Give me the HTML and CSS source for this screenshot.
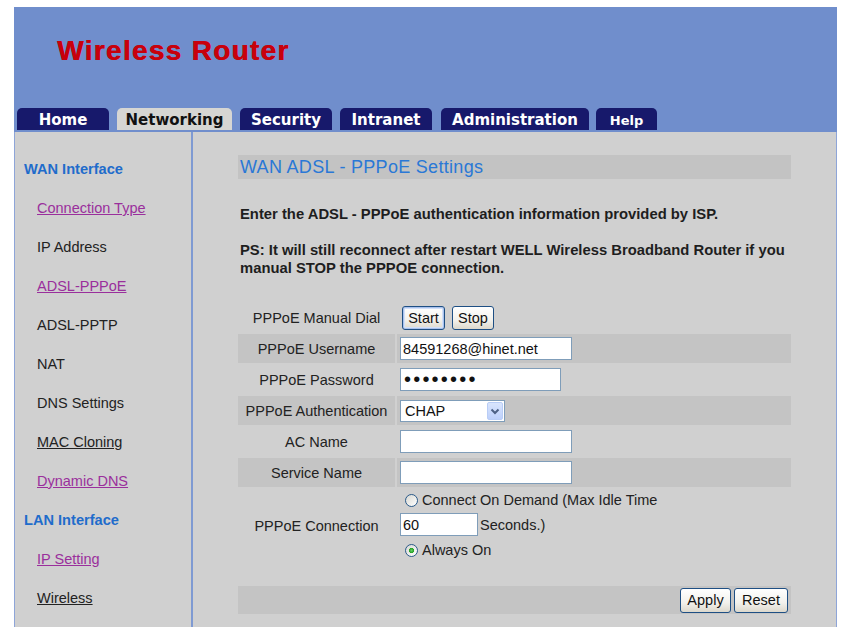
FILE: index.html
```html
<!DOCTYPE html>
<html lang="en">
<head>
<meta charset="utf-8">
<title>Wireless Router - WAN ADSL PPPoE Settings</title>
<link rel="stylesheet" href="styles.css">
</head>
<body>
<div class="page">
  <header class="header">
    <div class="brand">Wireless Router</div>
    <nav class="tabs">
      <a class="tab tab-home" href="#">Home</a>
      <a class="tab tab-networking active" href="#">Networking</a>
      <a class="tab tab-security" href="#">Security</a>
      <a class="tab tab-intranet" href="#">Intranet</a>
      <a class="tab tab-admin" href="#">Administration</a>
      <a class="tab tab-help" href="#">Help</a>
    </nav>
  </header>
  <div class="main">
    <aside class="sidebar">
      <div class="side-head">WAN Interface</div>
      <a class="side-link visited" href="#">Connection Type</a>
      <span class="side-link plain">IP Address</span>
      <a class="side-link visited" href="#">ADSL-PPPoE</a>
      <span class="side-link plain">ADSL-PPTP</span>
      <span class="side-link plain">NAT</span>
      <span class="side-link plain">DNS Settings</span>
      <a class="side-link link" href="#">MAC Cloning</a>
      <a class="side-link visited" href="#">Dynamic DNS</a>
      <div class="side-head">LAN Interface</div>
      <a class="side-link visited" href="#">IP Setting</a>
      <a class="side-link link" href="#">Wireless</a>
    </aside>
    <section class="content">
      <div class="title-bar">WAN ADSL - PPPoE Settings</div>
      <p class="note">Enter the ADSL - PPPoE authentication information provided by ISP.</p>
      <p class="note ps">PS: It will still reconnect after restart WELL Wireless Broadband Router if you<br>manual STOP the PPPOE connection.</p>
      <div class="form">
        <div class="cell-label">PPPoE Manual Dial</div>
        <div class="cell-value"><button class="btn btn-default btn-start" type="button">Start</button><button class="btn btn-stop" type="button">Stop</button></div>

        <div class="cell-label shade">PPPoE Username</div>
        <div class="cell-value shade"><input class="text w-long" type="text" value="84591268@hinet.net"></div>

        <div class="cell-label">PPPoE Password</div>
        <div class="cell-value"><input class="text w-pass pass" type="password" value="12345678"></div>

        <div class="cell-label shade">PPPoE Authentication</div>
        <div class="cell-value shade">
          <span class="select">
            <select class="select-native"><option>CHAP</option><option>PAP</option></select>
            <span class="select-arrow"><svg width="16" height="18" viewBox="0 0 16 18"><path d="M4.5 7.5 L8 11 L11.5 7.5" fill="none" stroke="#4d6185" stroke-width="2"/></svg></span>
          </span>
        </div>

        <div class="cell-label">AC Name</div>
        <div class="cell-value"><input class="text w-long" type="text" value=""></div>

        <div class="cell-label shade">Service Name</div>
        <div class="cell-value shade"><input class="text w-long" type="text" value=""></div>

        <div class="cell-label">PPPoE Connection</div>
        <div class="cell-value conn">
          <label class="opt-line"><input class="radio" type="radio" name="conn">Connect On Demand (Max Idle Time</label>
          <div class="idle-line"><input class="text w-idle" type="text" value="60"><span class="unit">Seconds.)</span></div>
          <label class="opt-line last"><input class="radio" type="radio" name="conn" checked>Always On</label>
        </div>
      </div>
      <div class="actions">
        <button class="btn btn-apply" type="button">Apply</button>
        <button class="btn btn-reset" type="button">Reset</button>
      </div>
    </section>
  </div>
</div>
</body>
</html>
```
FILE: styles.css
```css
body {
  margin: 0;
  background: #ffffff;
  font-family: "Liberation Sans", Arial, sans-serif;
  color: #222222;
}

.page {
  margin: 7px 0 0 14px;
  width: 823px;
}

/* ---------- header ---------- */
.header {
  height: 125px;
  background: #708ecc;
  display: flex;
  flex-direction: column;
}

.brand {
  margin: 30px 0 0 43px;
  font: bold 28px/28px "Liberation Sans", Arial, sans-serif;
  color: #c8000c;
  letter-spacing: 1.3px;
  text-shadow: 0.6px 0 0 #c8000c;
}

.tabs {
  margin-top: auto;
  margin-bottom: 2px;
  padding-left: 3px;
  display: flex;
  gap: 8px;
}

.tab {
  box-sizing: border-box;
  height: 22px;
  padding-top: 3px;
  border-radius: 5px 5px 0 0;
  background: #17196b;
  color: #ffffff;
  font: bold 15px/19px "DejaVu Sans", sans-serif;
  text-align: center;
  text-decoration: none;
}

.tab.active {
  background: #d6d6d3;
  color: #111111;
}

.tab-home { width: 92px; }
.tab-networking { width: 115px; }
.tab-security { width: 92px; }
.tab-intranet { width: 92px; }
.tab-admin { width: 148px; margin-left: 1px; }
.tab-help { width: 61px; margin-left: -1px; font-size: 13px; }

/* ---------- main ---------- */
.main {
  box-sizing: border-box;
  height: 495px;
  overflow: hidden;
  display: flex;
  background: #d0d0d0;
  border-left: 1px solid #8ea5d8;
  border-right: 1px solid #8ea5d8;
}

.sidebar {
  flex: 0 0 176px;
  border-right: 2px solid #7f9ad2;
  padding-top: 18px;
}

.side-head {
  padding-left: 9px;
  font: bold 14.6px/39px "Liberation Sans", Arial, sans-serif;
  color: #1f6ccb;
}

.side-link {
  display: block;
  padding-left: 22px;
  font-size: 14.5px;
  line-height: 39px;
  color: #222222;
}

.side-link.plain { text-decoration: none; }
.side-link.link { color: #222222; text-decoration: underline; }
.side-link.visited { color: #9a2f9c; text-decoration: underline; }

/* ---------- content ---------- */
.content {
  flex: 1;
  padding: 0 45px;
}

.title-bar {
  margin-top: 23px;
  height: 24px;
  padding-left: 2px;
  background: #c3c3c3;
  color: #2a78d6;
  font-size: 18px;
  line-height: 24px;
  letter-spacing: 0.3px;
}

.note {
  margin: 26px 0 0;
  padding-left: 2px;
  font-weight: bold;
  font-size: 14.8px;
  line-height: 18px;
  color: #1e1e1e;
}

.note.ps { margin-top: 18px; }

.form {
  margin-top: 26px;
  display: grid;
  grid-template-columns: 157px 1fr;
  grid-auto-rows: minmax(29px, auto);
  gap: 2px;
  font-size: 14.5px;
}

.cell-label {
  display: flex;
  align-items: center;
  justify-content: center;
  color: #222222;
}

.cell-value {
  display: flex;
  align-items: center;
  padding-left: 3px;
}

.shade { background: #c4c4c4; }

.text {
  box-sizing: border-box;
  height: 23px;
  margin: 0;
  padding: 0 2px;
  border: 1px solid #7f9db9;
  background: #ffffff;
  font: 14.5px "Liberation Sans", Arial, sans-serif;
  color: #111111;
  outline: none;
}

.w-long { width: 172px; }
.w-pass { width: 161px; }
.w-idle { width: 78px; }

.pass {
  font-size: 20px;
  letter-spacing: 2.2px;
  padding-left: 3px;
}

.select {
  position: relative;
  display: inline-block;
  width: 105px;
  height: 22px;
}

.select-native {
  box-sizing: border-box;
  width: 105px;
  height: 22px;
  margin: 0;
  padding: 0 0 0 4px;
  border: 1px solid #7f9db9;
  border-radius: 0;
  background: #ffffff;
  font: 14.5px "Liberation Sans", Arial, sans-serif;
  color: #111111;
  appearance: none;
  -webkit-appearance: none;
}

.select-arrow {
  position: absolute;
  top: 2px;
  right: 2px;
  width: 16px;
  height: 18px;
  box-sizing: border-box;
  border: 1px solid #b9cdf6;
  border-radius: 2px;
  background: linear-gradient(#d9e5fd, #bdd0fb);
  pointer-events: none;
}

.select-arrow svg {
  display: block;
  margin: -1px 0 0 -1px;
}

/* buttons */
.btn {
  box-sizing: border-box;
  height: 24px;
  margin: 0;
  padding: 0;
  border: 1px solid #1e4f84;
  border-radius: 3px;
  background: linear-gradient(#ffffff, #f2f1ec 60%, #dcd8cc);
  font: 14.5px "Liberation Sans", Arial, sans-serif;
  color: #111111;
}

.btn-default {
  box-shadow: inset 0 0 0 1px #a9c1ec, inset 0 0 0 2px #d2e0f8;
}

.btn-start { width: 43px; margin-left: 2px; }
.btn-stop { width: 42px; margin-left: 7px; }

/* connection row */
.cell-value.conn {
  flex-direction: column;
  align-items: flex-start;
}

.opt-line {
  display: flex;
  align-items: center;
  height: 22px;
  color: #222222;
}

.opt-line.last { height: 24px; }

.idle-line {
  display: flex;
  align-items: center;
  margin: 2px 0;
}

.unit { margin-left: 2px; }

.radio {
  appearance: none;
  -webkit-appearance: none;
  box-sizing: border-box;
  width: 13px;
  height: 13px;
  margin: 0 4px 0 5px;
  border: 1px solid #2a5a8a;
  border-radius: 50%;
  background: linear-gradient(135deg, #d8d8d2, #ffffff);
}

.radio:checked {
  background: radial-gradient(circle, #62cf62 0, #23a023 2.4px, transparent 2.9px), linear-gradient(135deg, #d8d8d2, #ffffff);
}

/* actions */
.actions {
  margin-top: 24px;
  height: 28px;
  background: #c4c4c4;
  display: flex;
  justify-content: flex-end;
  align-items: center;
  gap: 3px;
  padding-right: 3px;
}

.btn-apply { width: 51px; height: 25px; }
.btn-reset { width: 54px; height: 25px; }
```
